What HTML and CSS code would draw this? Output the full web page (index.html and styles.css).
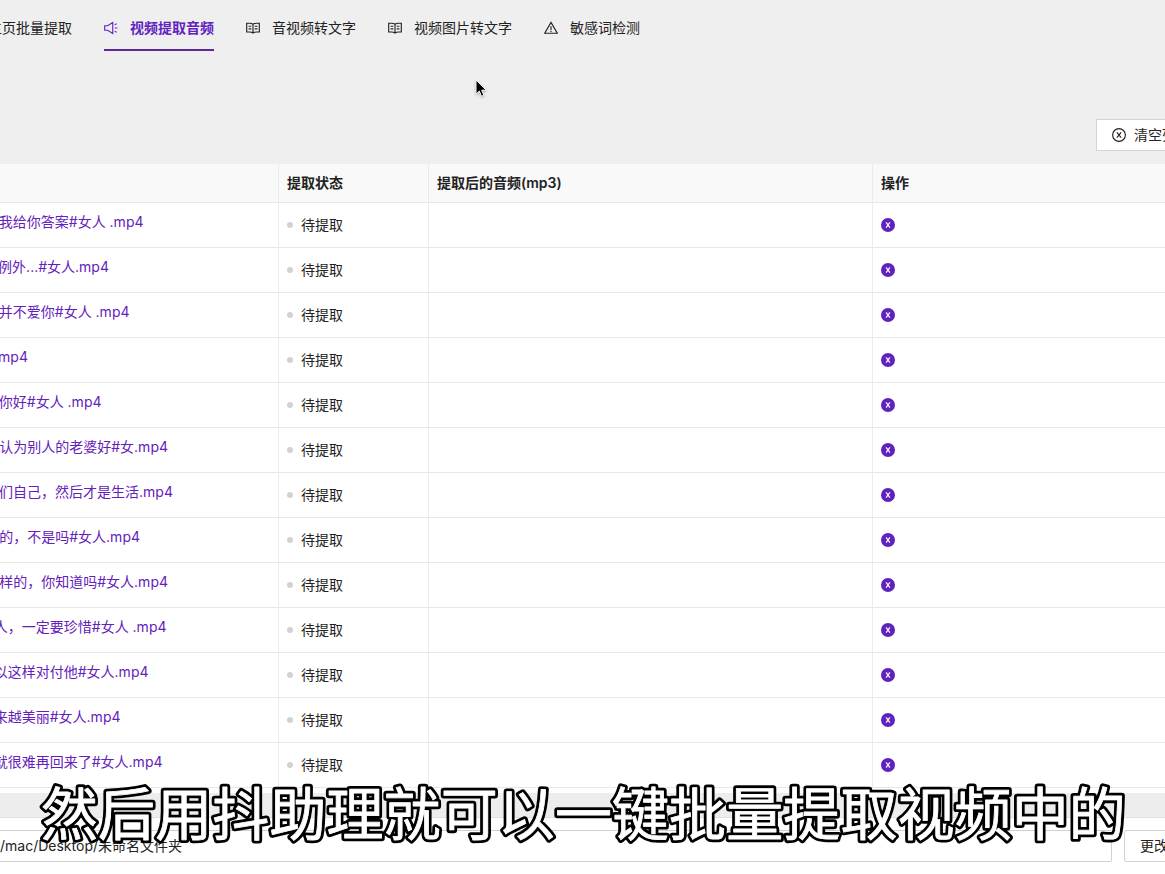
FILE: index.html
```html
<!DOCTYPE html>
<html lang="zh-CN">
<head>
	<meta charset="utf-8">
	<title>视频提取音频</title>
	<link rel="stylesheet" href="styles.css">
</head>
<body>

	<!-- shared icons -->
	<svg class="sprite">
		<symbol id="sound" viewBox="0 0 16 16">
			<path d="M.8 5.4h3.4L10 1.8v12.4L4.2 10.6H.8z M12.4 8h3 M12.2 4.4l2.2-1.2 M12.2 11.6l2.2 1.2"/>
		</symbol>
		<symbol id="read" viewBox="0 0 16 16">
			<path d="M8 3.8C6.8 2.9 5.4 2.6 4 2.6H.8v10H4c1.4 0 2.8.3 4 1.2 1.2-.9 2.6-1.2 4-1.2h3.2v-10H12c-1.4 0-2.8.3-4 1.2z M8 3.8v10 M3 6h3 M3 9h3 M10 6h3 M10 9h3"/>
		</symbol>
		<symbol id="warning" viewBox="0 0 16 16">
			<path d="M8 1.6L15.2 14H.8z M8 6v4.2 M8 11.2v1.3"/>
		</symbol>
		<symbol id="close" viewBox="0 0 16 16">
			<circle cx="8" cy="8" r="7.3"/>
			<path d="M5.6 5l4.8 6 M10.4 5l-4.8 6"/>
		</symbol>
	</svg>

	<nav class="tabs">
		<div class="tab">主页批量提取</div>
		<div class="tab active"><svg class="icon"><use href="#sound"/></svg>视频提取音频</div>
		<div class="tab"><svg class="icon"><use href="#read"/></svg>音视频转文字</div>
		<div class="tab"><svg class="icon"><use href="#read"/></svg>视频图片转文字</div>
		<div class="tab"><svg class="icon"><use href="#warning"/></svg>敏感词检测</div>
	</nav>

	<div class="toolbar">
		<button class="btn clear"><svg class="icon"><use href="#close"/></svg>清空列表</button>
	</div>

	<div class="table">
		<div class="row head">
			<div class="cell"></div>
			<div class="cell">提取状态</div>
			<div class="cell">提取后的音频(mp3)</div>
			<div class="cell">操作</div>
		</div>
		<div id="rows"></div>
	</div>
	<div class="scrollbar"></div>

	<div class="footer">
		<div class="path"><span>/mac/Desktop/未命名文件夹</span></div>
		<button class="btn change">更改目录</button>
	</div>

	<svg class="subtitle">
		<use class="outline" href="#line"/>
		<g class="face"><text id="line" x="0" y="62">然后用抖助理就可以一键批量提取视频中的</text></g>
	</svg>

	<svg class="cursor" viewBox="0 0 12 19">
		<path d="M1 1v14.2l3.3-3.1 2.2 5.2 2.4-1-2.2-5.1h4.6z"/>
	</svg>

	<script src="script.js"></script>
</body>
</html>
```

FILE: styles.css
```css
* {
	box-sizing: border-box;
}

body {
	margin: 0;
	height: 874px;
	overflow: hidden;
	position: relative;
	background: linear-gradient(#efefef 164px, #fff 164px);
	color: #222;
	font-family: Inter, "Noto Sans CJK SC", sans-serif;
	font-size: 14px;
	line-height: 22px;
}

.sprite {
	display: none;
}

.icon {
	width: 14px;
	height: 14px;
	flex: none;
	fill: none;
	stroke: currentColor;
	stroke-width: 1.3;
}

/* tabs */
.tabs {
	display: flex;
	gap: 32px;
	height: 51px;
	margin-left: -12px;
}
.tab {
	display: flex;
	align-items: center;
	gap: 12px;
	flex: none;
	padding-top: 7px;
	border-bottom: 2px solid transparent;
	white-space: nowrap;
}
.tab.active {
	color: #6222c0;
	font-weight: bold;
	border-bottom-color: #5a2a9c;
}

/* toolbar */
.toolbar {
	height: 113px;
	padding: 68px 0 0 1096px;
}
.btn {
	display: flex;
	align-items: center;
	height: 32px;
	padding: 0 15px;
	border: 1px solid #d4d4d4;
	background-color: #fff;
	color: #222;
	font: inherit;
	white-space: nowrap;
}
.clear {
	width: 110px;
	gap: 8px;
}

/* table */
.row {
	display: grid;
	grid-template-columns: 279px 150px 444px 1fr;
	height: 45px;
}
.cell {
	display: flex;
	align-items: center;
	padding: 0 8px;
	border-right: 1px solid #ebebeb;
	border-bottom: 1px solid #e8e8e8;
}
.cell:last-child {
	border-right: none;
}
.head {
	height: 39px;
	background-color: #f9f9f9;
	font-weight: 600;
}
.cell.file {
	padding: 0 0 6px;
}
/* long names keep their tail in view */
.name {
	display: flex;
	justify-content: flex-end;
	overflow: hidden;
	color: #6420bb;
	white-space: pre;
}
.dot {
	width: 6px;
	height: 6px;
	margin-right: 8px;
	border-radius: 50%;
	background-color: #d2d2d2;
}
.remove {
	width: 14px;
	height: 14px;
	fill: #5f22bd;
	stroke: #fff;
	stroke-width: 1.3;
}
.remove circle {
	stroke: none;
}

.scrollbar {
	height: 25px;
	margin-top: 5px;
	background-color: #ededed;
	border-bottom: 1px solid #e0e0e0;
}

/* footer */
.footer {
	display: flex;
	gap: 12px;
	margin-top: 12px;
}
.path {
	display: flex;
	align-items: center;
	width: 1112px;
	height: 32px;
	flex: none;
	border: 1px solid #d0d0d0;
	border-left: none;
	border-radius: 0 2px 2px 0;
}
.change {
	flex: none;
	border-radius: 2px;
}

/* overlays */
.subtitle {
	position: absolute;
	left: 41px;
	top: 773px;
	width: 1100px;
	height: 84px;
	overflow: visible;
	stroke-linejoin: round;
	font-family: "Noto Sans CJK SC", sans-serif;
	font-size: 57px;
	font-weight: 400;
	letter-spacing: 0.1px;
}
.outline {
	fill: #000;
	stroke: #000;
	stroke-width: 6.4px;
}
.face {
	fill: #fff;
	stroke: #fff;
	stroke-width: 0.8px;
}
.cursor {
	position: absolute;
	left: 475px;
	top: 79px;
	width: 12px;
	height: 19px;
	fill: #000;
	stroke: #fff;
	stroke-width: 1;
	filter: drop-shadow(0 1px 1px rgba(0, 0, 0, .3));
}
```

FILE: script.js
```js
// visible part of each file name and where it ends
const files = [
	['我给你答案#女人 .mp4', 143.5],
	['例外...#女人.mp4', 109],
	['并不爱你#女人 .mp4', 129.5],
	['mp4', 28],
	['你好#女人 .mp4', 101.5],
	['认为别人的老婆好#女.mp4', 168],
	['们自己，然后才是生活.mp4', 173],
	['的，不是吗#女人.mp4', 140],
	['样的，你知道吗#女人.mp4', 168],
	['人，一定要珍惜#女人 .mp4', 166.5],
	['以这样对付他#女人.mp4', 148.5],
	['来越美丽#女人.mp4', 120.5],
	['就很难再回来了#女人.mp4', 162.5]
];

document.getElementById('rows').innerHTML = files.map(([name, width]) => `
	<div class="row">
		<div class="cell file"><span class="name" style="width:${width}px"><span>${name}</span></span></div>
		<div class="cell"><i class="dot"></i>待提取</div>
		<div class="cell"></div>
		<div class="cell"><svg class="remove" viewBox="0 0 16 16">
			<circle cx="8" cy="8" r="8"/>
			<path d="M5.8 5l4.4 6 M10.2 5l-4.4 6"/>
		</svg></div>
	</div>`).join('');
```
